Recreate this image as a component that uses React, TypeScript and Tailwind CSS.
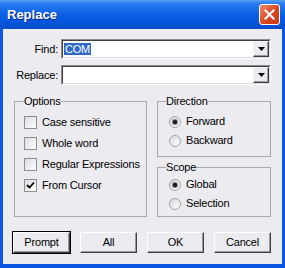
const font = "font-['Liberation_Sans',Arial,sans-serif]";

function Combo({ value }: { value?: string }) {
  return (
    <div className="flex h-[20px] flex-1 border border-t-[#8d8c90] border-l-[#8d8c90] border-r-white border-b-white">
      <div className="flex flex-1 items-center border border-t-[#404040] border-l-[#404040] border-r-[#dcdae0] border-b-[#dcdae0] bg-white pl-[1px]">
        <div className="flex-1">
          {value && (
            <span className="bg-[#316ac5] px-[1px] text-white leading-[13px]">{value}</span>
          )}
        </div>
        <div className="flex h-[16px] w-[16px] items-center justify-center border border-t-[#f4f3f6] border-l-[#f4f3f6] border-r-[#404040] border-b-[#404040] bg-[#ecebef] shadow-[inset_-1px_-1px_0_#9a999d]">
          <svg width="7" height="4" viewBox="0 0 7 4">
            <path d="M0 0h7L3.5 4z" fill="#000" />
          </svg>
        </div>
      </div>
    </div>
  );
}

function Check({ label, checked }: { label: string; checked?: boolean }) {
  return (
    <div className="flex h-[21px] items-center gap-[5px]">
      <div className="flex h-[13px] w-[13px] items-center justify-center border border-[#8e8d92] bg-gradient-to-br from-[#dcdbe0] to-white">
        {checked && (
          <svg width="9" height="9" viewBox="0 0 9 9">
            <path d="M1 4l2.5 2.5L8 1.5" stroke="#000" strokeWidth="1.8" fill="none" />
          </svg>
        )}
      </div>
      <span>{label}</span>
    </div>
  );
}

function Radio({ label, checked }: { label: string; checked?: boolean }) {
  return (
    <div className="flex h-[19px] items-center gap-[5px]">
      <div className="flex h-[12px] w-[12px] items-center justify-center rounded-full border border-[#a3a2a7] bg-gradient-to-br from-[#d8d7dc] to-white">
        {checked && <div className="h-[4px] w-[4px] rounded-full bg-[#1a1a1a] shadow-[0_0_0_1px_#7d7c80]" />}
      </div>
      <span>{label}</span>
    </div>
  );
}

function Button({ label, primary }: { label: string; primary?: boolean }) {
  return (
    <div className={primary ? "border border-black" : "border border-transparent"}>
      <div className="flex h-[21px] w-[57px] items-center justify-center border border-t-white border-l-white border-r-[#404040] border-b-[#404040] bg-[#ecebef] shadow-[inset_-1px_-1px_0_#9a999d]">
        {label}
      </div>
    </div>
  );
}

export default function App() {
  return (
    <div className={`${font} flex h-[268px] w-[285px] flex-col bg-[#0a57e4] text-[11px] tracking-[-0.2px] text-black`}>
      <div className="flex h-[29px] items-center justify-between bg-[linear-gradient(to_bottom,#5aa2f8_0%,#2a7ef0_12%,#0f62e6_45%,#0655df_75%,#0a4cc8_100%)] pl-[7px] pr-[5px]">
        <span className="text-[13px] font-bold tracking-normal text-white [text-shadow:1px_1px_0_#0a2a80]">Replace</span>
        <div className="flex h-[21px] w-[21px] items-center justify-center rounded-[3px] border border-white bg-[linear-gradient(to_bottom_right,#f08a6a,#d8461f_55%,#c73a16)]">
          <svg width="11" height="11" viewBox="0 0 11 11">
            <path d="M1.5 1.5l8 8M9.5 1.5l-8 8" stroke="#fff" strokeWidth="2.2" strokeLinecap="square" />
          </svg>
        </div>
      </div>

      <div className="mx-[3px] mb-[4px] flex flex-1 flex-col bg-[#ecebef] px-[11px] pt-[10px]">
        <div className="flex items-center">
          <span className="w-[44px] text-right">Find:</span>
          <div className="ml-[3px] flex flex-1">
            <Combo value="COM" />
          </div>
        </div>
        <div className="mt-[6px] flex items-center">
          <span className="w-[44px] text-right">Replace:</span>
          <div className="ml-[3px] flex flex-1">
            <Combo />
          </div>
        </div>

        <div className="mt-[10px] flex gap-[10px]">
          <fieldset className="h-[122px] w-[133px] border border-[#a9a8ad] pl-[9px]">
            <legend className="leading-[13px]">Options</legend>
            <div className="pt-[4px]">
              <Check label="Case sensitive" />
              <Check label="Whole word" />
              <Check label="Regular Expressions" />
              <Check label="From Cursor" checked />
            </div>
          </fieldset>
          <div className="flex flex-1 flex-col">
            <fieldset className="h-[62px] border border-[#a9a8ad] pl-[8px]">
              <legend className="leading-[13px]">Direction</legend>
              <div className="pl-[3px] pt-[4px]">
                <Radio label="Forward" checked />
                <Radio label="Backward" />
              </div>
            </fieldset>
            <fieldset className="mt-[4px] h-[56px] border border-[#a9a8ad] pl-[8px]">
              <legend className="leading-[13px]">Scope</legend>
              <div className="pl-[3px] pt-[1px]">
                <Radio label="Global" checked />
                <Radio label="Selection" />
              </div>
            </fieldset>
          </div>
        </div>

        <div className="-ml-[2px] -mr-[1px] mt-[14px] flex justify-between">
          <Button label="Prompt" primary />
          <Button label="All" />
          <Button label="OK" />
          <Button label="Cancel" />
        </div>
      </div>
    </div>
  );
}
